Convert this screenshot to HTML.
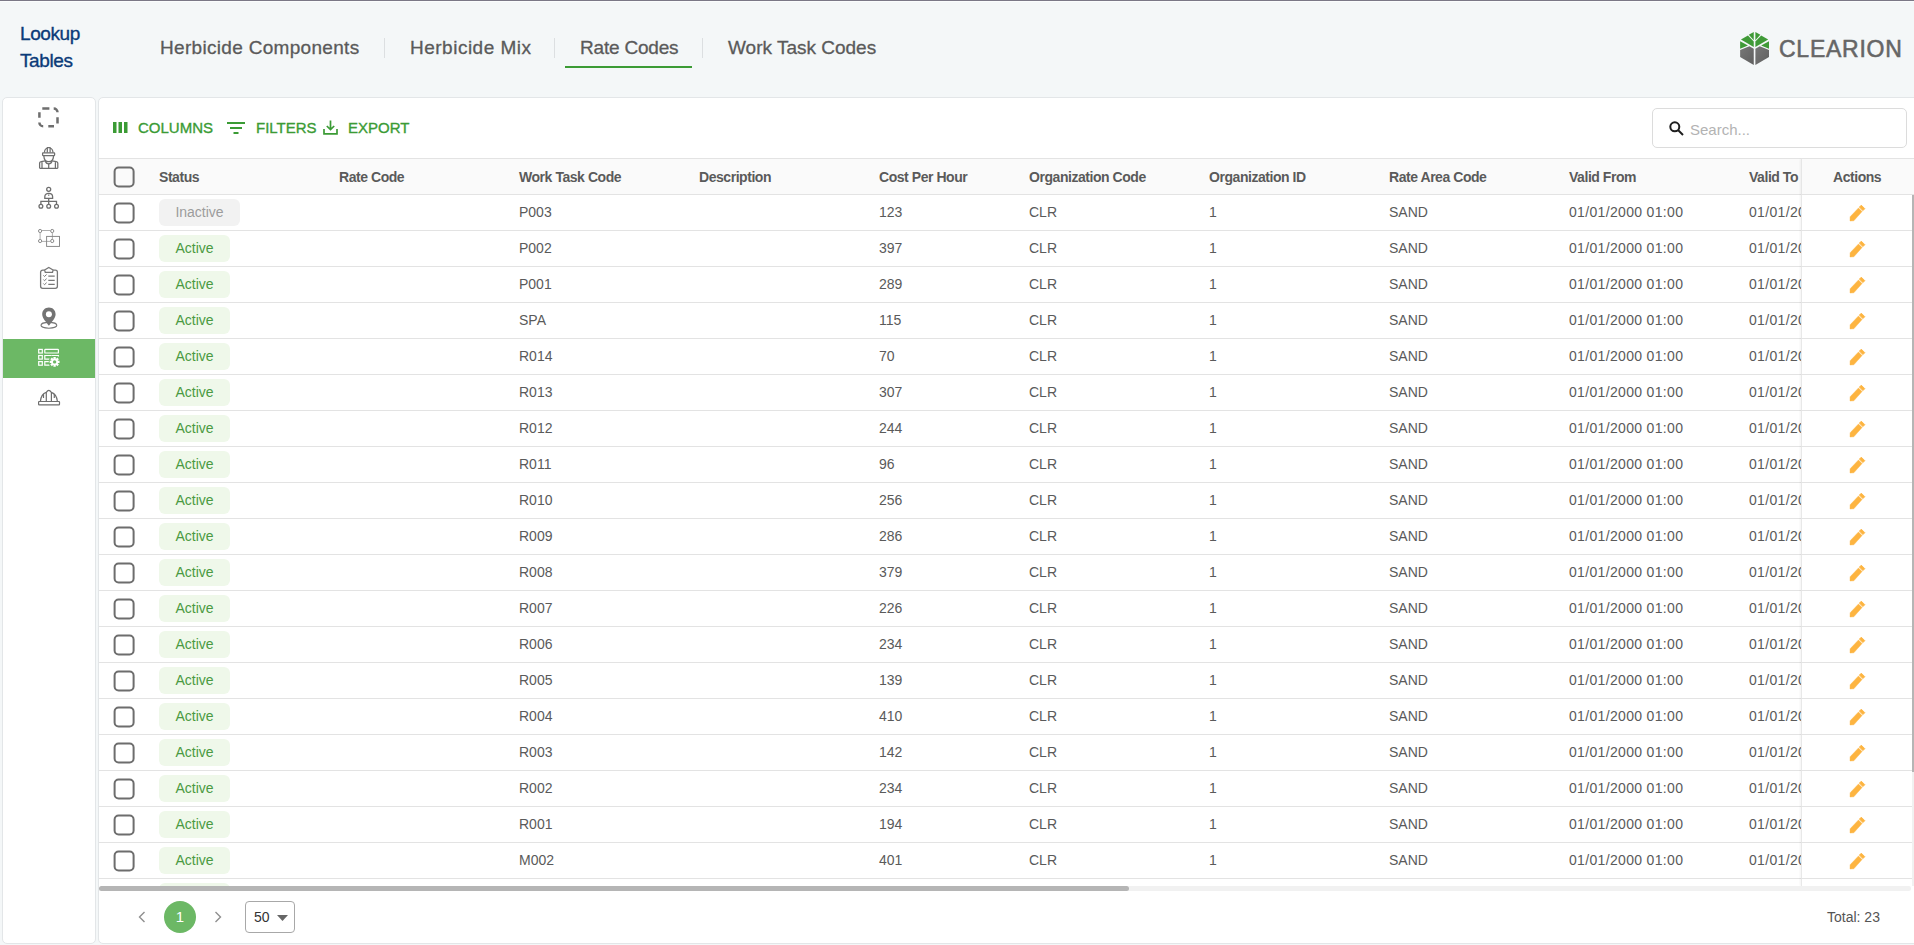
<!DOCTYPE html>
<html><head><meta charset="utf-8">
<style>
*{box-sizing:border-box}
html,body{margin:0;padding:0}
body{width:1914px;height:945px;overflow:hidden;position:relative;background:#f4f7f8;font-family:"Liberation Sans",sans-serif;color:#555}
.abs{position:absolute}
#topline{left:0;top:0;width:1914px;height:1px;background:#7b7886}
#topline2{left:0;top:1px;width:1914px;height:1px;background:#fbfdfd}
.title{left:20px;top:20px;letter-spacing:-0.4px;font-size:19px;line-height:27px;color:#0b3b78;-webkit-text-stroke:0.35px #0b3b78}
.tab{top:37px;font-size:19px;line-height:22px;color:#5a5a5a;white-space:nowrap;-webkit-text-stroke:0.3px #5a5a5a}
.sep{top:38px;width:1px;height:20px;background:#dcdfe1}
#uline{left:565px;top:66px;width:127px;height:2px;background:#3b9b35}
#side{left:2px;top:97px;width:94px;height:847px;background:#fff;border:1px solid #e3e6e8;border-radius:5px}
#main{left:98px;top:97px;width:1830px;height:847px;background:#fff;border:1px solid #e3e6e8;border-radius:5px;overflow:hidden}
.ico{left:34px;width:30px;height:30px}
#active{left:3px;top:339px;width:92px;height:39px;background:#6cb865}
.tool{top:118px;font-size:15px;line-height:20px;color:#3b9b35;white-space:nowrap;-webkit-text-stroke:0.35px #3b9b35}
#search{left:1652px;top:108px;width:255px;height:40px;border:1px solid #dcdcdc;border-radius:5px;background:#fff}
#search span{position:absolute;left:37px;top:11px;font-size:15px;line-height:20px;color:#b3b3b3}
.hline{height:1px;background:#e3e3e3}
#thead{left:99px;top:159px;width:1815px;height:35px;background:#fafafa}
.th{top:169px;font-size:14px;line-height:16px;font-weight:bold;color:#5a5a5a;white-space:nowrap;letter-spacing:-0.45px}
.cb{width:21px;height:21px;border:2px solid #6d6d6d;border-radius:5px;background:transparent;transform:translate(-0.4px,0.5px)}
.td{font-size:14px;line-height:16px;color:#5a5a5a;white-space:nowrap}
.badge{left:159px;height:27px;border-radius:6px;font-size:14px;line-height:27px;text-align:center}
.act{background:#eff8ea;color:#4a9a42;width:71px}
.inact{background:#f2f2f2;color:#9c9c9c;width:81px}
#pin{left:1801px;top:159px;width:111px;height:727px;background:#fff;border-left:1px solid #e8e8e8;box-shadow:-1px 0 2px rgba(0,0,0,0.05)}
</style></head><body>
<div id="topline" class="abs"></div>
<div id="topline2" class="abs"></div>
<div class="abs title">Lookup<br>Tables</div>
<div class="abs tab" style="left:160px;letter-spacing:0.31px">Herbicide Components</div>
<div class="abs sep" style="left:384px"></div>
<div class="abs tab" style="left:410px;letter-spacing:0.5px">Herbicide Mix</div>
<div class="abs sep" style="left:554px"></div>
<div class="abs tab" style="left:580px;letter-spacing:-0.2px">Rate Codes</div>
<div class="abs sep" style="left:702px"></div>
<div class="abs tab" style="left:728px">Work Task Codes</div>
<div id="uline" class="abs"></div>
<svg class="abs" style="left:1736px;top:29px" width="38" height="39" viewBox="0 0 921 945">
<defs><linearGradient id="gg" x1="0" y1="0" x2="1" y2="1"><stop offset="0" stop-color="#777"/><stop offset="1" stop-color="#5f5f5f"/></linearGradient></defs>
<g fill="#3f9a37">
<polygon points="430,70 310,140 430,275"/>
<polygon points="470,70 590,140 470,275"/>
<polygon points="120,255 290,160 430,300 430,435"/>
<polygon points="780,255 610,160 470,300 470,435"/>
<polygon points="100,295 290,400 100,480"/>
<polygon points="800,295 610,400 800,480"/>
</g>
<g fill="url(#gg)">
<polygon points="100,510 325,420 430,480 430,870 100,680"/>
<polygon points="800,510 575,420 470,480 470,870 800,680"/>
</g>
</svg>
<div class="abs" style="left:1779px;top:34px;font-size:23px;line-height:30px;color:#666;white-space:nowrap;letter-spacing:0.75px;-webkit-text-stroke:0.55px #666">CLEARION</div>

<div id="side" class="abs"></div>
<div id="active" class="abs"></div>
<div id="main" class="abs"></div>

<svg class="abs ico" style="top:104px" viewBox="0 0 30 30" fill="none" stroke="#6e6e6e" stroke-width="2.5">
<path d="M8.3 4.4H15.4M19.7 4.4A3.8 3.8 0 0 1 23.5 8.2M23.5 13.3V19.4M14.3 22.3H20M5.4 18.5A3.8 3.8 0 0 0 9.2 22.3M5.4 8.2V13.8"/>
</svg>
<svg class="abs ico" style="top:144px" viewBox="0 0 30 30" fill="none" stroke="#6e6e6e" stroke-width="1.25">
<path d="M10.4 8.6C10.6 5.8 12.2 4.3 13.3 4V8.6M19 8.6C18.8 5.8 17.2 4.3 16.1 4V8.6M13.3 8.6V3.6H16.1V8.6"/>
<rect x="8.6" y="8.9" width="12" height="2.6" rx="0.4"/>
<path d="M9.8 11.6C10 15.5 12 17.7 14.7 17.7C17.4 17.7 19.4 15.5 19.6 11.6"/>
<path d="M11.4 17C11.9 19 13.1 19.8 14.7 19.8C16.3 19.8 17.5 19 18 17"/>
<path d="M5.6 24.3V18.9C5.6 18.2 6.2 17.8 7.2 17.6L11.2 16.9M23.8 24.3V18.9C23.8 18.2 23.2 17.8 22.2 17.6L18.2 16.9M5.6 24.3H23.8M8 18V24.3M21.4 18V24.3M14.7 19.8V24.3"/>
</svg>
<svg class="abs ico" style="top:184px" viewBox="0 0 30 30" fill="none" stroke="#6e6e6e" stroke-width="1.3">
<circle cx="14.7" cy="5.3" r="2"/>
<path d="M10.8 14.3V12.7C10.8 10.6 12.5 9.3 14.7 9.3C16.9 9.3 18.6 10.6 18.6 12.7V14.3Z"/>
<path d="M14.7 10.5V11.8M14.7 14.3V17.3M6.9 20.3V17.3H22.5V20.3M14.7 17.3V20.3"/>
<circle cx="6.9" cy="22.3" r="1.9"/><circle cx="14.7" cy="22.3" r="1.9"/><circle cx="22.5" cy="22.3" r="1.9"/>
</svg>
<svg class="abs ico" style="top:224px" viewBox="0 0 30 30" fill="none" stroke="#858585" stroke-width="0.95">
<circle cx="6.1" cy="7" r="1.6"/><circle cx="18.2" cy="7" r="1.6"/><circle cx="6.1" cy="17" r="1.6"/><circle cx="18.2" cy="17" r="1.6"/>
<path d="M7.7 6.5H16.6M6.1 8.6V15.4M7.7 17.4H16.6M18.4 8.6V15.4" stroke="#aaa"/>
<rect x="12.6" y="12.4" width="12.9" height="10"/>
</svg>
<svg class="abs ico" style="top:264px" viewBox="0 0 30 30" fill="none" stroke="#777" stroke-width="1.3">
<path d="M10.4 6.2H8.7C7.5 6.2 6.6 7.1 6.6 8.3V22.3C6.6 23.5 7.5 24.4 8.7 24.4H21.3C22.5 24.4 23.4 23.5 23.4 22.3V8.3C23.4 7.1 22.5 6.2 21.3 6.2H19.2"/>
<path d="M11.3 8.4H18.5L19.1 6L14.8 3.4L10.6 6Z"/>
<path d="M9.4 11.3L10.5 12.5L12.6 10.5M9.4 15.5L10.5 16.7L12.6 14.7M9.4 19.5L10.5 20.7L12.6 18.7" stroke-width="1"/>
<path d="M14.3 12.1H20.7M14.3 16.4H20.7M14.3 20.4H20.7" stroke-width="1.2"/>
</svg>
<svg class="abs ico" style="top:304px" viewBox="0 0 30 30">
<ellipse cx="14.9" cy="21.3" rx="7.9" ry="2.9" fill="none" stroke="#777" stroke-width="1.1"/>
<path d="M14.9 3.4C11 3.4 8.2 6.3 8.2 10.2C8.2 14.2 12.4 18 14.9 21.8C17.4 18 21.6 14.2 21.6 10.2C21.6 6.3 18.8 3.4 14.9 3.4Z" fill="#737373"/>
<circle cx="14.9" cy="10.3" r="3" fill="#fff"/>
</svg>
<svg class="abs ico" style="top:344px" viewBox="0 0 30 30" fill="none" stroke="#fff" stroke-width="1.2">
<rect x="4.7" y="5.4" width="3.6" height="3.6"/><rect x="4.7" y="11.5" width="3.6" height="3.6"/><rect x="4.7" y="17.6" width="3.6" height="3.6"/>
<rect x="10.8" y="5.4" width="13.6" height="3.6" rx="0.6"/>
<path d="M17.5 11.5H10.8V15.1H15.5M16 17.6H10.8V21.2H15.5"/>
<path d="M17.5 11.5H24.4V12.6"/>
<circle cx="20.6" cy="17.9" r="5.9" fill="#6cb865" stroke="none"/><path d="M23.92 16.80 L25.55 16.69 L25.55 19.11 L23.92 19.00 L23.73 19.47 L24.96 20.55 L23.25 22.26 L22.17 21.03 L21.70 21.22 L21.81 22.85 L19.39 22.85 L19.50 21.22 L19.03 21.03 L17.95 22.26 L16.24 20.55 L17.47 19.47 L17.28 19.00 L15.65 19.11 L15.65 16.69 L17.28 16.80 L17.47 16.33 L16.24 15.25 L17.95 13.54 L19.03 14.77 L19.50 14.58 L19.39 12.95 L21.81 12.95 L21.70 14.58 L22.17 14.77 L23.25 13.54 L24.96 15.25 L23.73 16.33Z" fill="#fff" stroke="none"/><circle cx="20.6" cy="17.9" r="1.7" fill="#6cb865" stroke="none"/>
</svg>
<svg class="abs ico" style="top:384px" viewBox="0 0 30 30" fill="none" stroke="#6e6e6e" stroke-width="1.2">
<rect x="4.6" y="17.5" width="20.9" height="3.4" rx="0.6"/>
<path d="M6.4 17.4C6.8 12.5 9.5 9.3 12.3 8.4C13.2 7 14 6.4 14.8 6.4C15.6 6.4 16.4 7 17.4 8.4C20.1 9.3 22.9 12.5 23.4 17.4"/>
<path d="M12.3 8.4V17.4M17.4 8.4V17.4M9.5 9.9V14M20.3 9.9V14"/>
</svg>

<svg class="abs" style="left:113px;top:122px" width="15" height="11" viewBox="0 0 15 11"><rect x="0" y="0" width="3.5" height="11" fill="#3b9b35"/><rect x="5.5" y="0" width="3.5" height="11" fill="#3b9b35"/><rect x="11" y="0" width="3.5" height="11" fill="#3b9b35"/></svg>
<div class="abs tool" style="left:138px">COLUMNS</div>
<svg class="abs" style="left:227px;top:121px" width="18" height="14" viewBox="0 0 18 14"><path d="M0 2H18M3 7H15M6.5 12H11.5" stroke="#3b9b35" stroke-width="2"/></svg>
<div class="abs tool" style="left:256px">FILTERS</div>
<svg class="abs" style="left:323px;top:120px" width="15" height="15" viewBox="0 0 15 15" fill="none" stroke="#3b9b35" stroke-width="1.7"><path d="M7.5 0.5V9.5M3.8 6L7.5 9.6L11.2 6M1 9V13.8H14V9"/></svg>
<div class="abs tool" style="left:348px">EXPORT</div>
<div id="search" class="abs"><svg style="position:absolute;left:16px;top:12px" width="15" height="15" viewBox="0 0 15 15" fill="none" stroke="#1e1e1e" stroke-width="2"><circle cx="5.8" cy="5.8" r="4.5"/><path d="M9 9L14 14"/></svg><span>Search...</span></div>

<div class="abs hline" style="left:99px;top:158px;width:1815px"></div>
<div id="thead" class="abs"></div>
<div class="abs hline" style="left:99px;top:194px;width:1815px"></div>
<div class="abs cb" style="left:114px;top:166px"></div>
<div class="abs th" style="left:159px">Status</div>
<div class="abs th" style="left:339px">Rate Code</div>
<div class="abs th" style="left:519px">Work Task Code</div>
<div class="abs th" style="left:699px">Description</div>
<div class="abs th" style="left:879px">Cost Per Hour</div>
<div class="abs th" style="left:1029px">Organization Code</div>
<div class="abs th" style="left:1209px">Organization ID</div>
<div class="abs th" style="left:1389px">Rate Area Code</div>
<div class="abs th" style="left:1569px">Valid From</div>
<div class="abs th" style="left:1749px">Valid To</div>
<div class="abs" style="left:99px;top:195px;width:1815px;height:691px;overflow:hidden">
<div class="abs hline" style="left:0;top:35px;width:1815px"></div>
<div class="abs cb" style="left:15px;top:7px"></div>
<div class="abs badge inact" style="left:60px;top:4px">Inactive</div>
<div class="abs td" style="left:420px;top:9px">P003</div>
<div class="abs td" style="left:780px;top:9px">123</div>
<div class="abs td" style="left:930px;top:9px">CLR</div>
<div class="abs td" style="left:1110px;top:9px">1</div>
<div class="abs td" style="left:1290px;top:9px">SAND</div>
<div class="abs td" style="left:1470px;top:9px;letter-spacing:0.33px">01/01/2000 01:00</div>
<div class="abs td" style="left:1650px;top:9px;letter-spacing:0.33px">01/01/2000 01:00</div>
<div class="abs hline" style="left:0;top:71px;width:1815px"></div>
<div class="abs cb" style="left:15px;top:43px"></div>
<div class="abs badge act" style="left:60px;top:40px">Active</div>
<div class="abs td" style="left:420px;top:45px">P002</div>
<div class="abs td" style="left:780px;top:45px">397</div>
<div class="abs td" style="left:930px;top:45px">CLR</div>
<div class="abs td" style="left:1110px;top:45px">1</div>
<div class="abs td" style="left:1290px;top:45px">SAND</div>
<div class="abs td" style="left:1470px;top:45px;letter-spacing:0.33px">01/01/2000 01:00</div>
<div class="abs td" style="left:1650px;top:45px;letter-spacing:0.33px">01/01/2000 01:00</div>
<div class="abs hline" style="left:0;top:107px;width:1815px"></div>
<div class="abs cb" style="left:15px;top:79px"></div>
<div class="abs badge act" style="left:60px;top:76px">Active</div>
<div class="abs td" style="left:420px;top:81px">P001</div>
<div class="abs td" style="left:780px;top:81px">289</div>
<div class="abs td" style="left:930px;top:81px">CLR</div>
<div class="abs td" style="left:1110px;top:81px">1</div>
<div class="abs td" style="left:1290px;top:81px">SAND</div>
<div class="abs td" style="left:1470px;top:81px;letter-spacing:0.33px">01/01/2000 01:00</div>
<div class="abs td" style="left:1650px;top:81px;letter-spacing:0.33px">01/01/2000 01:00</div>
<div class="abs hline" style="left:0;top:143px;width:1815px"></div>
<div class="abs cb" style="left:15px;top:115px"></div>
<div class="abs badge act" style="left:60px;top:112px">Active</div>
<div class="abs td" style="left:420px;top:117px">SPA</div>
<div class="abs td" style="left:780px;top:117px">115</div>
<div class="abs td" style="left:930px;top:117px">CLR</div>
<div class="abs td" style="left:1110px;top:117px">1</div>
<div class="abs td" style="left:1290px;top:117px">SAND</div>
<div class="abs td" style="left:1470px;top:117px;letter-spacing:0.33px">01/01/2000 01:00</div>
<div class="abs td" style="left:1650px;top:117px;letter-spacing:0.33px">01/01/2000 01:00</div>
<div class="abs hline" style="left:0;top:179px;width:1815px"></div>
<div class="abs cb" style="left:15px;top:151px"></div>
<div class="abs badge act" style="left:60px;top:148px">Active</div>
<div class="abs td" style="left:420px;top:153px">R014</div>
<div class="abs td" style="left:780px;top:153px">70</div>
<div class="abs td" style="left:930px;top:153px">CLR</div>
<div class="abs td" style="left:1110px;top:153px">1</div>
<div class="abs td" style="left:1290px;top:153px">SAND</div>
<div class="abs td" style="left:1470px;top:153px;letter-spacing:0.33px">01/01/2000 01:00</div>
<div class="abs td" style="left:1650px;top:153px;letter-spacing:0.33px">01/01/2000 01:00</div>
<div class="abs hline" style="left:0;top:215px;width:1815px"></div>
<div class="abs cb" style="left:15px;top:187px"></div>
<div class="abs badge act" style="left:60px;top:184px">Active</div>
<div class="abs td" style="left:420px;top:189px">R013</div>
<div class="abs td" style="left:780px;top:189px">307</div>
<div class="abs td" style="left:930px;top:189px">CLR</div>
<div class="abs td" style="left:1110px;top:189px">1</div>
<div class="abs td" style="left:1290px;top:189px">SAND</div>
<div class="abs td" style="left:1470px;top:189px;letter-spacing:0.33px">01/01/2000 01:00</div>
<div class="abs td" style="left:1650px;top:189px;letter-spacing:0.33px">01/01/2000 01:00</div>
<div class="abs hline" style="left:0;top:251px;width:1815px"></div>
<div class="abs cb" style="left:15px;top:223px"></div>
<div class="abs badge act" style="left:60px;top:220px">Active</div>
<div class="abs td" style="left:420px;top:225px">R012</div>
<div class="abs td" style="left:780px;top:225px">244</div>
<div class="abs td" style="left:930px;top:225px">CLR</div>
<div class="abs td" style="left:1110px;top:225px">1</div>
<div class="abs td" style="left:1290px;top:225px">SAND</div>
<div class="abs td" style="left:1470px;top:225px;letter-spacing:0.33px">01/01/2000 01:00</div>
<div class="abs td" style="left:1650px;top:225px;letter-spacing:0.33px">01/01/2000 01:00</div>
<div class="abs hline" style="left:0;top:287px;width:1815px"></div>
<div class="abs cb" style="left:15px;top:259px"></div>
<div class="abs badge act" style="left:60px;top:256px">Active</div>
<div class="abs td" style="left:420px;top:261px">R011</div>
<div class="abs td" style="left:780px;top:261px">96</div>
<div class="abs td" style="left:930px;top:261px">CLR</div>
<div class="abs td" style="left:1110px;top:261px">1</div>
<div class="abs td" style="left:1290px;top:261px">SAND</div>
<div class="abs td" style="left:1470px;top:261px;letter-spacing:0.33px">01/01/2000 01:00</div>
<div class="abs td" style="left:1650px;top:261px;letter-spacing:0.33px">01/01/2000 01:00</div>
<div class="abs hline" style="left:0;top:323px;width:1815px"></div>
<div class="abs cb" style="left:15px;top:295px"></div>
<div class="abs badge act" style="left:60px;top:292px">Active</div>
<div class="abs td" style="left:420px;top:297px">R010</div>
<div class="abs td" style="left:780px;top:297px">256</div>
<div class="abs td" style="left:930px;top:297px">CLR</div>
<div class="abs td" style="left:1110px;top:297px">1</div>
<div class="abs td" style="left:1290px;top:297px">SAND</div>
<div class="abs td" style="left:1470px;top:297px;letter-spacing:0.33px">01/01/2000 01:00</div>
<div class="abs td" style="left:1650px;top:297px;letter-spacing:0.33px">01/01/2000 01:00</div>
<div class="abs hline" style="left:0;top:359px;width:1815px"></div>
<div class="abs cb" style="left:15px;top:331px"></div>
<div class="abs badge act" style="left:60px;top:328px">Active</div>
<div class="abs td" style="left:420px;top:333px">R009</div>
<div class="abs td" style="left:780px;top:333px">286</div>
<div class="abs td" style="left:930px;top:333px">CLR</div>
<div class="abs td" style="left:1110px;top:333px">1</div>
<div class="abs td" style="left:1290px;top:333px">SAND</div>
<div class="abs td" style="left:1470px;top:333px;letter-spacing:0.33px">01/01/2000 01:00</div>
<div class="abs td" style="left:1650px;top:333px;letter-spacing:0.33px">01/01/2000 01:00</div>
<div class="abs hline" style="left:0;top:395px;width:1815px"></div>
<div class="abs cb" style="left:15px;top:367px"></div>
<div class="abs badge act" style="left:60px;top:364px">Active</div>
<div class="abs td" style="left:420px;top:369px">R008</div>
<div class="abs td" style="left:780px;top:369px">379</div>
<div class="abs td" style="left:930px;top:369px">CLR</div>
<div class="abs td" style="left:1110px;top:369px">1</div>
<div class="abs td" style="left:1290px;top:369px">SAND</div>
<div class="abs td" style="left:1470px;top:369px;letter-spacing:0.33px">01/01/2000 01:00</div>
<div class="abs td" style="left:1650px;top:369px;letter-spacing:0.33px">01/01/2000 01:00</div>
<div class="abs hline" style="left:0;top:431px;width:1815px"></div>
<div class="abs cb" style="left:15px;top:403px"></div>
<div class="abs badge act" style="left:60px;top:400px">Active</div>
<div class="abs td" style="left:420px;top:405px">R007</div>
<div class="abs td" style="left:780px;top:405px">226</div>
<div class="abs td" style="left:930px;top:405px">CLR</div>
<div class="abs td" style="left:1110px;top:405px">1</div>
<div class="abs td" style="left:1290px;top:405px">SAND</div>
<div class="abs td" style="left:1470px;top:405px;letter-spacing:0.33px">01/01/2000 01:00</div>
<div class="abs td" style="left:1650px;top:405px;letter-spacing:0.33px">01/01/2000 01:00</div>
<div class="abs hline" style="left:0;top:467px;width:1815px"></div>
<div class="abs cb" style="left:15px;top:439px"></div>
<div class="abs badge act" style="left:60px;top:436px">Active</div>
<div class="abs td" style="left:420px;top:441px">R006</div>
<div class="abs td" style="left:780px;top:441px">234</div>
<div class="abs td" style="left:930px;top:441px">CLR</div>
<div class="abs td" style="left:1110px;top:441px">1</div>
<div class="abs td" style="left:1290px;top:441px">SAND</div>
<div class="abs td" style="left:1470px;top:441px;letter-spacing:0.33px">01/01/2000 01:00</div>
<div class="abs td" style="left:1650px;top:441px;letter-spacing:0.33px">01/01/2000 01:00</div>
<div class="abs hline" style="left:0;top:503px;width:1815px"></div>
<div class="abs cb" style="left:15px;top:475px"></div>
<div class="abs badge act" style="left:60px;top:472px">Active</div>
<div class="abs td" style="left:420px;top:477px">R005</div>
<div class="abs td" style="left:780px;top:477px">139</div>
<div class="abs td" style="left:930px;top:477px">CLR</div>
<div class="abs td" style="left:1110px;top:477px">1</div>
<div class="abs td" style="left:1290px;top:477px">SAND</div>
<div class="abs td" style="left:1470px;top:477px;letter-spacing:0.33px">01/01/2000 01:00</div>
<div class="abs td" style="left:1650px;top:477px;letter-spacing:0.33px">01/01/2000 01:00</div>
<div class="abs hline" style="left:0;top:539px;width:1815px"></div>
<div class="abs cb" style="left:15px;top:511px"></div>
<div class="abs badge act" style="left:60px;top:508px">Active</div>
<div class="abs td" style="left:420px;top:513px">R004</div>
<div class="abs td" style="left:780px;top:513px">410</div>
<div class="abs td" style="left:930px;top:513px">CLR</div>
<div class="abs td" style="left:1110px;top:513px">1</div>
<div class="abs td" style="left:1290px;top:513px">SAND</div>
<div class="abs td" style="left:1470px;top:513px;letter-spacing:0.33px">01/01/2000 01:00</div>
<div class="abs td" style="left:1650px;top:513px;letter-spacing:0.33px">01/01/2000 01:00</div>
<div class="abs hline" style="left:0;top:575px;width:1815px"></div>
<div class="abs cb" style="left:15px;top:547px"></div>
<div class="abs badge act" style="left:60px;top:544px">Active</div>
<div class="abs td" style="left:420px;top:549px">R003</div>
<div class="abs td" style="left:780px;top:549px">142</div>
<div class="abs td" style="left:930px;top:549px">CLR</div>
<div class="abs td" style="left:1110px;top:549px">1</div>
<div class="abs td" style="left:1290px;top:549px">SAND</div>
<div class="abs td" style="left:1470px;top:549px;letter-spacing:0.33px">01/01/2000 01:00</div>
<div class="abs td" style="left:1650px;top:549px;letter-spacing:0.33px">01/01/2000 01:00</div>
<div class="abs hline" style="left:0;top:611px;width:1815px"></div>
<div class="abs cb" style="left:15px;top:583px"></div>
<div class="abs badge act" style="left:60px;top:580px">Active</div>
<div class="abs td" style="left:420px;top:585px">R002</div>
<div class="abs td" style="left:780px;top:585px">234</div>
<div class="abs td" style="left:930px;top:585px">CLR</div>
<div class="abs td" style="left:1110px;top:585px">1</div>
<div class="abs td" style="left:1290px;top:585px">SAND</div>
<div class="abs td" style="left:1470px;top:585px;letter-spacing:0.33px">01/01/2000 01:00</div>
<div class="abs td" style="left:1650px;top:585px;letter-spacing:0.33px">01/01/2000 01:00</div>
<div class="abs hline" style="left:0;top:647px;width:1815px"></div>
<div class="abs cb" style="left:15px;top:619px"></div>
<div class="abs badge act" style="left:60px;top:616px">Active</div>
<div class="abs td" style="left:420px;top:621px">R001</div>
<div class="abs td" style="left:780px;top:621px">194</div>
<div class="abs td" style="left:930px;top:621px">CLR</div>
<div class="abs td" style="left:1110px;top:621px">1</div>
<div class="abs td" style="left:1290px;top:621px">SAND</div>
<div class="abs td" style="left:1470px;top:621px;letter-spacing:0.33px">01/01/2000 01:00</div>
<div class="abs td" style="left:1650px;top:621px;letter-spacing:0.33px">01/01/2000 01:00</div>
<div class="abs hline" style="left:0;top:683px;width:1815px"></div>
<div class="abs cb" style="left:15px;top:655px"></div>
<div class="abs badge act" style="left:60px;top:652px">Active</div>
<div class="abs td" style="left:420px;top:657px">M002</div>
<div class="abs td" style="left:780px;top:657px">401</div>
<div class="abs td" style="left:930px;top:657px">CLR</div>
<div class="abs td" style="left:1110px;top:657px">1</div>
<div class="abs td" style="left:1290px;top:657px">SAND</div>
<div class="abs td" style="left:1470px;top:657px;letter-spacing:0.33px">01/01/2000 01:00</div>
<div class="abs td" style="left:1650px;top:657px;letter-spacing:0.33px">01/01/2000 01:00</div>
<div class="abs hline" style="left:0;top:719px;width:1815px"></div>
<div class="abs cb" style="left:15px;top:691px"></div>
<div class="abs badge act" style="left:60px;top:688px">Active</div>
<div class="abs td" style="left:420px;top:693px">M001</div>
<div class="abs td" style="left:780px;top:693px">0</div>
<div class="abs td" style="left:930px;top:693px">CLR</div>
<div class="abs td" style="left:1110px;top:693px">1</div>
<div class="abs td" style="left:1290px;top:693px">SAND</div>
<div class="abs td" style="left:1470px;top:693px;letter-spacing:0.33px">01/01/2000 01:00</div>
<div class="abs td" style="left:1650px;top:693px;letter-spacing:0.33px">01/01/2000 01:00</div>
</div>
<div id="pin" class="abs"></div>
<div class="abs" style="left:1801px;top:159px;width:111px;height:35px;background:#fafafa;border-left:1px solid #e6e6e6"></div>
<div class="abs hline" style="left:1801px;top:158px;width:113px"></div>
<div class="abs hline" style="left:1801px;top:194px;width:113px"></div>
<div class="abs th" style="left:1833px">Actions</div>
<div class="abs" style="left:1801px;top:195px;width:111px;height:691px;overflow:hidden">
<div class="abs hline" style="left:0;top:35px;width:111px"></div>
<svg class="abs" style="left:44px;top:5px" width="25" height="25" viewBox="0 0 25 25"><path d="M13.5 7.9L17.1 11.5L8.8 20.8L5 21L5.1 16.8Z" fill="#fdb440" stroke="#fdb440" stroke-width="0.4" stroke-linejoin="round"/><path d="M14.4 7.1L16.3 5.2L19.8 8.7L17.9 10.6Z" fill="#fdb440" stroke="#fdb440" stroke-width="0.9" stroke-linejoin="round"/></svg>
<div class="abs hline" style="left:0;top:71px;width:111px"></div>
<svg class="abs" style="left:44px;top:41px" width="25" height="25" viewBox="0 0 25 25"><path d="M13.5 7.9L17.1 11.5L8.8 20.8L5 21L5.1 16.8Z" fill="#fdb440" stroke="#fdb440" stroke-width="0.4" stroke-linejoin="round"/><path d="M14.4 7.1L16.3 5.2L19.8 8.7L17.9 10.6Z" fill="#fdb440" stroke="#fdb440" stroke-width="0.9" stroke-linejoin="round"/></svg>
<div class="abs hline" style="left:0;top:107px;width:111px"></div>
<svg class="abs" style="left:44px;top:77px" width="25" height="25" viewBox="0 0 25 25"><path d="M13.5 7.9L17.1 11.5L8.8 20.8L5 21L5.1 16.8Z" fill="#fdb440" stroke="#fdb440" stroke-width="0.4" stroke-linejoin="round"/><path d="M14.4 7.1L16.3 5.2L19.8 8.7L17.9 10.6Z" fill="#fdb440" stroke="#fdb440" stroke-width="0.9" stroke-linejoin="round"/></svg>
<div class="abs hline" style="left:0;top:143px;width:111px"></div>
<svg class="abs" style="left:44px;top:113px" width="25" height="25" viewBox="0 0 25 25"><path d="M13.5 7.9L17.1 11.5L8.8 20.8L5 21L5.1 16.8Z" fill="#fdb440" stroke="#fdb440" stroke-width="0.4" stroke-linejoin="round"/><path d="M14.4 7.1L16.3 5.2L19.8 8.7L17.9 10.6Z" fill="#fdb440" stroke="#fdb440" stroke-width="0.9" stroke-linejoin="round"/></svg>
<div class="abs hline" style="left:0;top:179px;width:111px"></div>
<svg class="abs" style="left:44px;top:149px" width="25" height="25" viewBox="0 0 25 25"><path d="M13.5 7.9L17.1 11.5L8.8 20.8L5 21L5.1 16.8Z" fill="#fdb440" stroke="#fdb440" stroke-width="0.4" stroke-linejoin="round"/><path d="M14.4 7.1L16.3 5.2L19.8 8.7L17.9 10.6Z" fill="#fdb440" stroke="#fdb440" stroke-width="0.9" stroke-linejoin="round"/></svg>
<div class="abs hline" style="left:0;top:215px;width:111px"></div>
<svg class="abs" style="left:44px;top:185px" width="25" height="25" viewBox="0 0 25 25"><path d="M13.5 7.9L17.1 11.5L8.8 20.8L5 21L5.1 16.8Z" fill="#fdb440" stroke="#fdb440" stroke-width="0.4" stroke-linejoin="round"/><path d="M14.4 7.1L16.3 5.2L19.8 8.7L17.9 10.6Z" fill="#fdb440" stroke="#fdb440" stroke-width="0.9" stroke-linejoin="round"/></svg>
<div class="abs hline" style="left:0;top:251px;width:111px"></div>
<svg class="abs" style="left:44px;top:221px" width="25" height="25" viewBox="0 0 25 25"><path d="M13.5 7.9L17.1 11.5L8.8 20.8L5 21L5.1 16.8Z" fill="#fdb440" stroke="#fdb440" stroke-width="0.4" stroke-linejoin="round"/><path d="M14.4 7.1L16.3 5.2L19.8 8.7L17.9 10.6Z" fill="#fdb440" stroke="#fdb440" stroke-width="0.9" stroke-linejoin="round"/></svg>
<div class="abs hline" style="left:0;top:287px;width:111px"></div>
<svg class="abs" style="left:44px;top:257px" width="25" height="25" viewBox="0 0 25 25"><path d="M13.5 7.9L17.1 11.5L8.8 20.8L5 21L5.1 16.8Z" fill="#fdb440" stroke="#fdb440" stroke-width="0.4" stroke-linejoin="round"/><path d="M14.4 7.1L16.3 5.2L19.8 8.7L17.9 10.6Z" fill="#fdb440" stroke="#fdb440" stroke-width="0.9" stroke-linejoin="round"/></svg>
<div class="abs hline" style="left:0;top:323px;width:111px"></div>
<svg class="abs" style="left:44px;top:293px" width="25" height="25" viewBox="0 0 25 25"><path d="M13.5 7.9L17.1 11.5L8.8 20.8L5 21L5.1 16.8Z" fill="#fdb440" stroke="#fdb440" stroke-width="0.4" stroke-linejoin="round"/><path d="M14.4 7.1L16.3 5.2L19.8 8.7L17.9 10.6Z" fill="#fdb440" stroke="#fdb440" stroke-width="0.9" stroke-linejoin="round"/></svg>
<div class="abs hline" style="left:0;top:359px;width:111px"></div>
<svg class="abs" style="left:44px;top:329px" width="25" height="25" viewBox="0 0 25 25"><path d="M13.5 7.9L17.1 11.5L8.8 20.8L5 21L5.1 16.8Z" fill="#fdb440" stroke="#fdb440" stroke-width="0.4" stroke-linejoin="round"/><path d="M14.4 7.1L16.3 5.2L19.8 8.7L17.9 10.6Z" fill="#fdb440" stroke="#fdb440" stroke-width="0.9" stroke-linejoin="round"/></svg>
<div class="abs hline" style="left:0;top:395px;width:111px"></div>
<svg class="abs" style="left:44px;top:365px" width="25" height="25" viewBox="0 0 25 25"><path d="M13.5 7.9L17.1 11.5L8.8 20.8L5 21L5.1 16.8Z" fill="#fdb440" stroke="#fdb440" stroke-width="0.4" stroke-linejoin="round"/><path d="M14.4 7.1L16.3 5.2L19.8 8.7L17.9 10.6Z" fill="#fdb440" stroke="#fdb440" stroke-width="0.9" stroke-linejoin="round"/></svg>
<div class="abs hline" style="left:0;top:431px;width:111px"></div>
<svg class="abs" style="left:44px;top:401px" width="25" height="25" viewBox="0 0 25 25"><path d="M13.5 7.9L17.1 11.5L8.8 20.8L5 21L5.1 16.8Z" fill="#fdb440" stroke="#fdb440" stroke-width="0.4" stroke-linejoin="round"/><path d="M14.4 7.1L16.3 5.2L19.8 8.7L17.9 10.6Z" fill="#fdb440" stroke="#fdb440" stroke-width="0.9" stroke-linejoin="round"/></svg>
<div class="abs hline" style="left:0;top:467px;width:111px"></div>
<svg class="abs" style="left:44px;top:437px" width="25" height="25" viewBox="0 0 25 25"><path d="M13.5 7.9L17.1 11.5L8.8 20.8L5 21L5.1 16.8Z" fill="#fdb440" stroke="#fdb440" stroke-width="0.4" stroke-linejoin="round"/><path d="M14.4 7.1L16.3 5.2L19.8 8.7L17.9 10.6Z" fill="#fdb440" stroke="#fdb440" stroke-width="0.9" stroke-linejoin="round"/></svg>
<div class="abs hline" style="left:0;top:503px;width:111px"></div>
<svg class="abs" style="left:44px;top:473px" width="25" height="25" viewBox="0 0 25 25"><path d="M13.5 7.9L17.1 11.5L8.8 20.8L5 21L5.1 16.8Z" fill="#fdb440" stroke="#fdb440" stroke-width="0.4" stroke-linejoin="round"/><path d="M14.4 7.1L16.3 5.2L19.8 8.7L17.9 10.6Z" fill="#fdb440" stroke="#fdb440" stroke-width="0.9" stroke-linejoin="round"/></svg>
<div class="abs hline" style="left:0;top:539px;width:111px"></div>
<svg class="abs" style="left:44px;top:509px" width="25" height="25" viewBox="0 0 25 25"><path d="M13.5 7.9L17.1 11.5L8.8 20.8L5 21L5.1 16.8Z" fill="#fdb440" stroke="#fdb440" stroke-width="0.4" stroke-linejoin="round"/><path d="M14.4 7.1L16.3 5.2L19.8 8.7L17.9 10.6Z" fill="#fdb440" stroke="#fdb440" stroke-width="0.9" stroke-linejoin="round"/></svg>
<div class="abs hline" style="left:0;top:575px;width:111px"></div>
<svg class="abs" style="left:44px;top:545px" width="25" height="25" viewBox="0 0 25 25"><path d="M13.5 7.9L17.1 11.5L8.8 20.8L5 21L5.1 16.8Z" fill="#fdb440" stroke="#fdb440" stroke-width="0.4" stroke-linejoin="round"/><path d="M14.4 7.1L16.3 5.2L19.8 8.7L17.9 10.6Z" fill="#fdb440" stroke="#fdb440" stroke-width="0.9" stroke-linejoin="round"/></svg>
<div class="abs hline" style="left:0;top:611px;width:111px"></div>
<svg class="abs" style="left:44px;top:581px" width="25" height="25" viewBox="0 0 25 25"><path d="M13.5 7.9L17.1 11.5L8.8 20.8L5 21L5.1 16.8Z" fill="#fdb440" stroke="#fdb440" stroke-width="0.4" stroke-linejoin="round"/><path d="M14.4 7.1L16.3 5.2L19.8 8.7L17.9 10.6Z" fill="#fdb440" stroke="#fdb440" stroke-width="0.9" stroke-linejoin="round"/></svg>
<div class="abs hline" style="left:0;top:647px;width:111px"></div>
<svg class="abs" style="left:44px;top:617px" width="25" height="25" viewBox="0 0 25 25"><path d="M13.5 7.9L17.1 11.5L8.8 20.8L5 21L5.1 16.8Z" fill="#fdb440" stroke="#fdb440" stroke-width="0.4" stroke-linejoin="round"/><path d="M14.4 7.1L16.3 5.2L19.8 8.7L17.9 10.6Z" fill="#fdb440" stroke="#fdb440" stroke-width="0.9" stroke-linejoin="round"/></svg>
<div class="abs hline" style="left:0;top:683px;width:111px"></div>
<svg class="abs" style="left:44px;top:653px" width="25" height="25" viewBox="0 0 25 25"><path d="M13.5 7.9L17.1 11.5L8.8 20.8L5 21L5.1 16.8Z" fill="#fdb440" stroke="#fdb440" stroke-width="0.4" stroke-linejoin="round"/><path d="M14.4 7.1L16.3 5.2L19.8 8.7L17.9 10.6Z" fill="#fdb440" stroke="#fdb440" stroke-width="0.9" stroke-linejoin="round"/></svg>
<div class="abs hline" style="left:0;top:719px;width:111px"></div>
<svg class="abs" style="left:44px;top:689px" width="25" height="25" viewBox="0 0 25 25"><path d="M13.5 7.9L17.1 11.5L8.8 20.8L5 21L5.1 16.8Z" fill="#fdb440" stroke="#fdb440" stroke-width="0.4" stroke-linejoin="round"/><path d="M14.4 7.1L16.3 5.2L19.8 8.7L17.9 10.6Z" fill="#fdb440" stroke="#fdb440" stroke-width="0.9" stroke-linejoin="round"/></svg>
</div>
<div class="abs" style="left:1912px;top:195px;width:2px;height:691px;background:#f1f1f1"></div>
<div class="abs" style="left:1912px;top:195px;width:2px;height:577px;background:#b5b5b5"></div>
<div class="abs" style="left:99px;top:886px;width:1812px;height:5px;background:#f1f1f1;border-radius:3px"></div>
<div class="abs" style="left:99px;top:886px;width:1030px;height:5px;background:#b5b5b5;border-radius:3px"></div>
<svg class="abs" style="left:138px;top:911px" width="8" height="12" viewBox="0 0 8 12"><path d="M6.5 1L1.5 6L6.5 11" fill="none" stroke="#8f8f8f" stroke-width="1.4"/></svg>
<div class="abs" style="left:164px;top:901px;width:32px;height:32px;border-radius:50%;background:#6cb865;color:#fff;font-size:15px;line-height:32px;text-align:center">1</div>
<svg class="abs" style="left:214px;top:911px" width="8" height="12" viewBox="0 0 8 12"><path d="M1.5 1L6.5 6L1.5 11" fill="none" stroke="#8f8f8f" stroke-width="1.4"/></svg>
<div class="abs" style="left:245px;top:901px;width:50px;height:32px;border:1px solid #a8a8a8;border-radius:4px;background:#fff"><span style="position:absolute;left:8px;top:7px;font-size:14px;line-height:16px;color:#333">50</span><svg style="position:absolute;left:31px;top:13px" width="11" height="6" viewBox="0 0 11 6"><path d="M0 0H11L5.5 6Z" fill="#666"/></svg></div>
<div class="abs td" style="left:1827px;top:909px;color:#555">Total: 23</div>

</body></html>
